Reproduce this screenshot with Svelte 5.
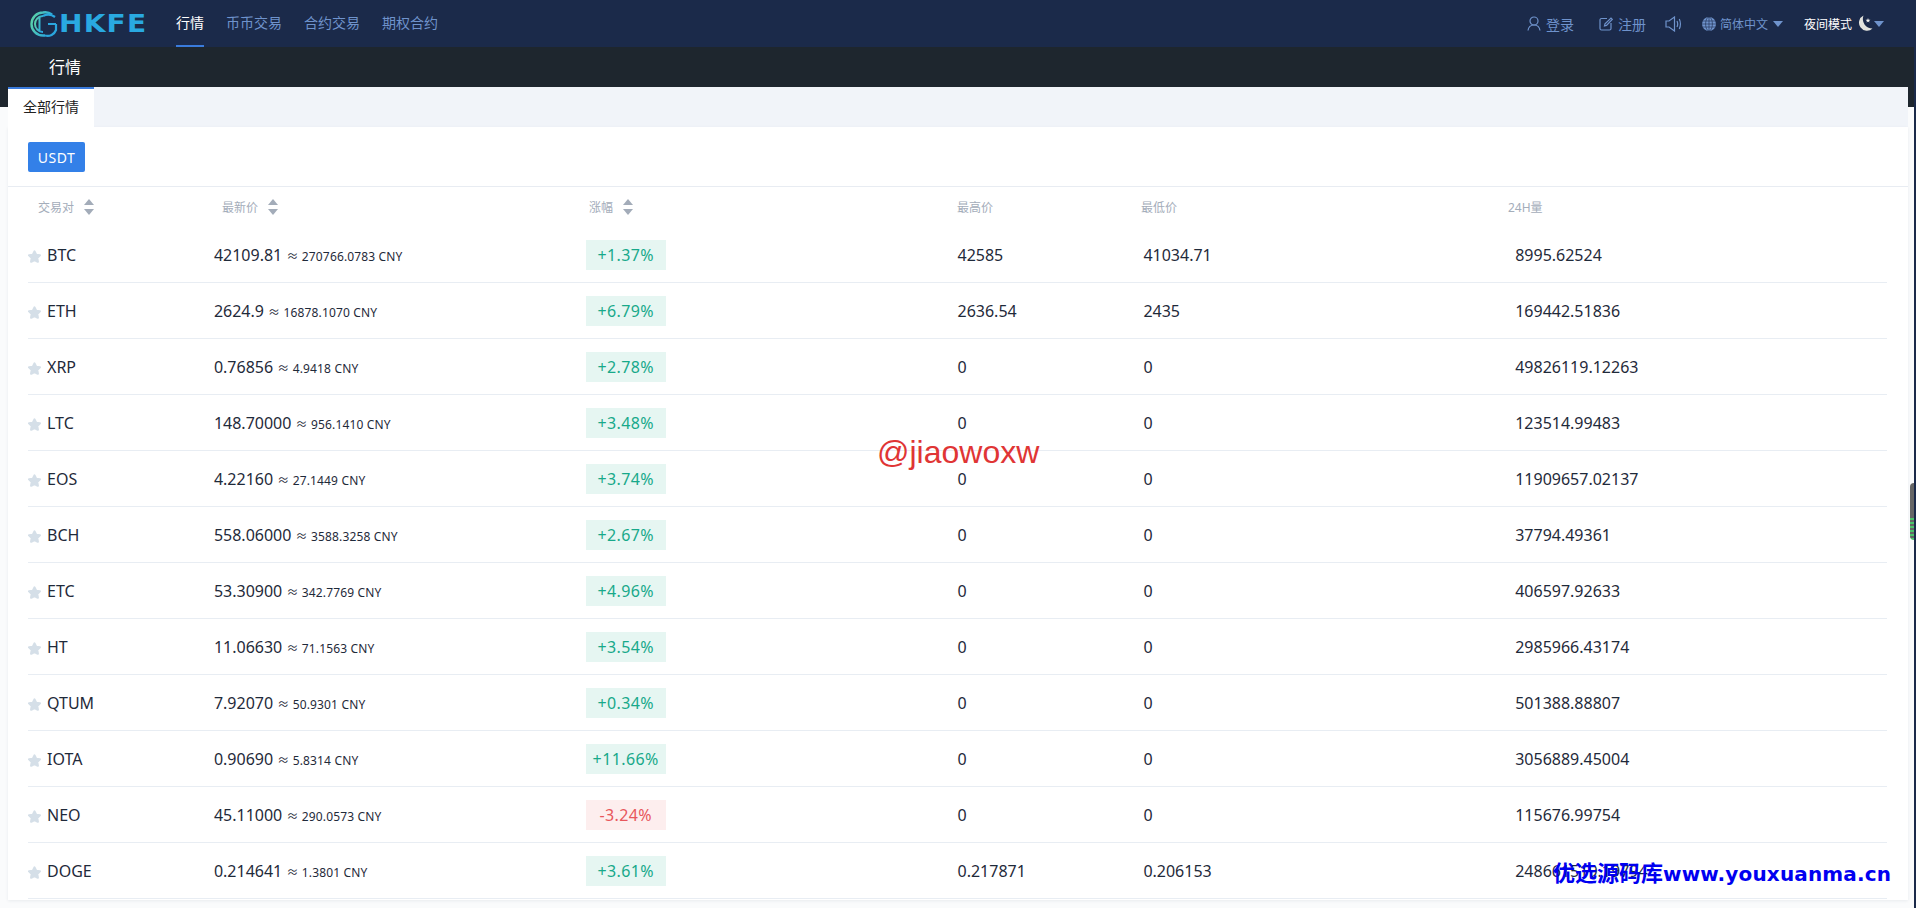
<script>
  const NAV = ['币币交易', '合约交易', '期权合约']

  const HEAD = [
    { label: '交易对', sort: true },
    { label: '最新价', sort: true },
    { label: '涨幅', sort: true },
    { label: '最高价' },
    { label: '最低价' },
    { label: '24H量' },
  ]

  const ROWS = [
    ['BTC', '42109.81', '270766.0783', '+1.37%', '42585', '41034.71', '8995.62524'],
    ['ETH', '2624.9', '16878.1070', '+6.79%', '2636.54', '2435', '169442.51836'],
    ['XRP', '0.76856', '4.9418', '+2.78%', '0', '0', '49826119.12263'],
    ['LTC', '148.70000', '956.1410', '+3.48%', '0', '0', '123514.99483'],
    ['EOS', '4.22160', '27.1449', '+3.74%', '0', '0', '11909657.02137'],
    ['BCH', '558.06000', '3588.3258', '+2.67%', '0', '0', '37794.49361'],
    ['ETC', '53.30900', '342.7769', '+4.96%', '0', '0', '406597.92633'],
    ['HT', '11.06630', '71.1563', '+3.54%', '0', '0', '2985966.43174'],
    ['QTUM', '7.92070', '50.9301', '+0.34%', '0', '0', '501388.88807'],
    ['IOTA', '0.90690', '5.8314', '+11.66%', '0', '0', '3056889.45004'],
    ['NEO', '45.11000', '290.0573', '-3.24%', '0', '0', '115676.99754'],
    ['DOGE', '0.214641', '1.3801', '+3.61%', '0.217871', '0.206153', '248661519.19794'],
  ]
</script>

<div class="page">
  <header class="top">
    <div class="logo">
      <svg width="28" height="26" viewBox="0 0 28 26" fill="none">
        <defs>
          <linearGradient id="lg" x1="0" y1="0" x2="1" y2="0.4">
            <stop offset="0" stop-color="#5fd6a4" />
            <stop offset="1" stop-color="#2aa6de" />
          </linearGradient>
        </defs>
        <path d="M22 3.5 A11 11 0 0 0 13 1.5 A11.5 11.5 0 0 0 13 24.5 L15 24.5" stroke="url(#lg)" stroke-width="2.4" />
        <path d="M13 5 A8 8 0 0 0 13 21 M9.5 5 V21" stroke="url(#lg)" stroke-width="2" />
        <path d="M25 6 A10 8 0 0 0 13 5 M26 13 H18 M26 13 V19 A9 9 0 0 1 15 24.5" stroke="#2aa6de" stroke-width="2.2" />
      </svg>
      <span class="word">HKFE</span>
    </div>
    <nav class="nav">
      <a class="on" href="#top">行情</a>
      {#each NAV as n}
        <a href="#top">{n}</a>
      {/each}
    </nav>
    <div class="tools">
      <span class="tool t-login">
        <svg width="14" height="15" viewBox="0 0 14 15" fill="none" stroke="currentColor" stroke-width="1.2">
          <circle cx="7" cy="5" r="4" />
          <path d="M1 14.5 C1.5 11 4 9 7 9 C10 9 12.5 11 13 14.5" />
        </svg>
        登录
      </span>
      <span class="tool t-reg">
        <svg width="14" height="14" viewBox="0 0 14 14" fill="none" stroke="currentColor" stroke-width="1.2">
          <path d="M8 1.5 H2.5 A1.5 1.5 0 0 0 1 3 V11.5 A1.5 1.5 0 0 0 2.5 13 H10.5 A1.5 1.5 0 0 0 12 11.5 V6" />
          <path d="M5.5 9 L6 6.8 L12 1 L13.3 2.3 L7.5 8.4 Z" />
        </svg>
        注册
      </span>
      <svg class="t-sound" width="17" height="16" viewBox="0 0 17 16" fill="none" stroke="currentColor" stroke-width="1.2">
        <path d="M1 5 H4 L9.5 1 V15 L4 11 H1 Z" />
        <path d="M12 5 Q13.4 8 12 11 M14.3 3 Q16.6 8 14.3 13" />
      </svg>
      <span class="tool t-lang">
        <svg width="14" height="14" viewBox="0 0 14 14" fill="#6f93cc" stroke="#1b2a4a" stroke-width="0.6">
          <circle cx="7" cy="7" r="7" stroke="none" />
          <path d="M0 4 H14 M0 7 H14 M0 10 H14" fill="none" />
          <ellipse cx="7" cy="7" rx="3.4" ry="7" fill="none" />
          <path d="M7 0 V14" fill="none" />
        </svg>
        <span class="small">简体中文</span>
        <i class="caret"></i>
      </span>
      <span class="tool t-night">
        <span class="small">夜间模式</span>
        <svg width="17" height="17" viewBox="0 0 17 17">
          <path d="M6.5 0.5 A8 8 0 1 0 15.5 13.5 A9.5 9.5 0 0 1 6.5 0.5 Z" fill="#e4e4de" />
          <path d="M11 3 L11.6 4.7 L13.4 4.8 L12 5.9 L12.5 7.6 L11 6.6 L9.5 7.6 L10 5.9 L8.6 4.8 L10.4 4.7 Z" fill="#f4f4f0" />
        </svg>
        <i class="caret"></i>
      </span>
    </div>
  </header>

  <div class="banner"><span>行情</span></div>

  <main class="main">
    <div class="tabs"><span class="tab">全部行情</span></div>
    <div class="panel">
      <div class="filter"><button class="btn">USDT</button></div>

      <div class="thead">
        {#each HEAD as h}
          <span class="th">
            {h.label}
            {#if h.sort}
              <span class="sort"><i class="up"></i><i class="down"></i></span>
            {/if}
          </span>
        {/each}
      </div>

      <div class="tbody">
        {#each ROWS as r}
          <div class="row">
            <span class="pair">
              <svg class="star" width="13" height="13" viewBox="0 0 24 24">
                <path d="M12 2.5 L15 8.8 L22 9.8 L17 14.8 L18.2 21.6 L12 18.4 L5.8 21.6 L7 14.8 L2 9.8 L9 8.8 Z" fill="#d5dfe8" stroke="#d5dfe8" stroke-width="4" stroke-linejoin="round" />
              </svg>
              {r[0]}
            </span>
            <span>{r[1]} <small>≈ {r[2]} CNY</small></span>
            <span><b class="rate" class:down={r[3][0] === '-'}>{r[3]}</b></span>
            <span>{r[4]}</span>
            <span>{r[5]}</span>
            <span>{r[6]}</span>
          </div>
        {/each}
      </div>
    </div>
  </main>

  <div class="mark-red">@jiaowoxw</div>
  <div class="mark-blue"><span>优选源码库</span>www.youxuanma.cn</div>
  <div class="handle"></div>
</div>

<style>
  :global(body) {
    margin: 0;
    background: #fafbfc;
  }

  .page {
    position: relative;
    height: 908px;
    overflow: hidden;
    box-sizing: border-box;
    border-right: 2px solid #1b2a4a;
    font-family: "Noto Sans", "Noto Sans CJK SC", sans-serif;
    color: #1f2a3a;
  }

  .top {
    height: 47px;
    background: #1b2a4a;
    display: flex;
    align-items: center;
    padding-left: 30px;
    color: #6f93cc;
    font-size: 14px;
  }

  .logo {
    display: flex;
    align-items: center;
    width: 146px;
    height: 47px;
  }
  .word {
    font-family: "DejaVu Sans", sans-serif;
    font-weight: 700;
    font-size: 24px;
    letter-spacing: 1px;
    margin-left: 1px;
    color: #29a9e1;
    line-height: 1;
    transform: scaleX(1.17);
    transform-origin: left center;
  }

  .nav {
    display: flex;
    gap: 22px;
    height: 47px;
  }
  .nav a {
    color: #6f93cc;
    text-decoration: none;
    line-height: 45px;
    height: 45px;
    border-bottom: 2px solid transparent;
  }
  .nav a.on {
    color: #fff;
    border-bottom-color: #3a7bdc;
  }

  .tools {
    margin-left: auto;
    display: flex;
    align-items: center;
    margin-right: 30px;
  }
  .tool {
    display: inline-flex;
    align-items: center;
  }
  .t-login svg, .t-reg svg { margin-right: 5px; }
  .t-reg { margin-left: 25px; }
  .t-sound { margin-left: 19px; }
  .t-lang { margin-left: 20px; }
  .t-lang svg { margin-right: 4px; }
  .t-night { margin-left: 21px; color: #fff; }
  .t-night svg { margin-left: 5px; }
  .small { font-size: 12px; }

  .caret {
    display: inline-block;
    width: 0;
    height: 0;
    margin-left: 5px;
    border-left: 5px solid transparent;
    border-right: 5px solid transparent;
    border-top: 6px solid #6f93cc;
  }
  .t-night .caret { margin-left: 0; }

  .banner {
    height: 60px;
    background: #1e262e;
    color: #fff;
    font-size: 16px;
    padding-left: 49px;
    line-height: 40px;
  }

  .main {
    margin-top: -20px;
    padding: 0 6px 0 8px;
  }

  .tabs {
    height: 40px;
    background: #f1f4f9;
    display: flex;
  }
  .tab {
    width: 86px;
    box-sizing: border-box;
    background: #fff;
    border-top: 2px solid #3a7bdc;
    font-size: 14px;
    color: #222;
    text-align: center;
    line-height: 35px;
  }

  .panel {
    background: #fff;
    box-shadow: 0 1px 3px rgba(30, 50, 80, .08);
    height: 773px;
  }

  .filter {
    padding: 15px 20px 14px;
    height: 30px;
    border-bottom: 1px solid #e8ecf2;
  }
  .btn {
    display: block;
    width: 57px;
    height: 30px;
    padding: 0;
    border: none;
    border-radius: 2px;
    background: #3380e8;
    color: #fff;
    font-family: inherit;
    font-size: 14px;
    letter-spacing: .5px;
  }

  .thead {
    display: grid;
    grid-template-columns: 184px 367px 368px 184px 367px 1fr;
    height: 40px;
    padding-left: 30px;
    align-items: center;
    margin-right: 20px;
    font-size: 12px;
    color: #a4adba;
  }
  .th {
    display: inline-flex;
    align-items: center;
  }
  .sort {
    display: inline-flex;
    flex-direction: column;
    gap: 4px;
    margin-left: 10px;
  }
  .sort i {
    display: block;
    width: 0;
    height: 0;
    border-left: 5px solid transparent;
    border-right: 5px solid transparent;
  }
  .sort .up { border-bottom: 6px solid #a3acb9; }
  .sort .down { border-top: 6px solid #a3acb9; }

  .tbody {
    margin: 0 21px 0 20px;
  }
  .row {
    display: grid;
    grid-template-columns: 10% 20% 20% 10% 20% 20%;
    height: 55px;
    align-items: center;
    border-bottom: 1px solid #e8edf3;
    font-size: 16px;
  }
  .pair {
    display: flex;
    align-items: center;
    gap: 6px;
  }
  .star {
    margin-top: 3px;
  }
  small {
    font-size: 12px;
    letter-spacing: .15px;
  }

  .rate {
    display: block;
    width: 80px;
    height: 30px;
    line-height: 30px;
    text-align: center;
    font-weight: 400;
    letter-spacing: .4px;
    color: #18a98a;
    background: #e6f6f2;
  }
  .rate.down {
    color: #e8575c;
    background: #fdeeee;
  }

  .mark-red {
    position: absolute;
    left: 877px;
    top: 432px;
    font-family: "Liberation Sans", sans-serif;
    font-size: 32px;
    line-height: 40px;
    color: #e03535;
  }
  .mark-blue {
    position: absolute;
    left: 1553px;
    top: 856px;
    font-family: "DejaVu Sans", sans-serif;
    font-weight: 700;
    font-size: 20px;
    line-height: 30px;
    letter-spacing: .15px;
    color: #0000f0;
    white-space: nowrap;
  }
  .mark-blue span {
    font-family: "Noto Sans CJK SC", sans-serif;
    font-size: 22px;
    letter-spacing: 0;
  }

  .handle {
    position: absolute;
    right: 0;
    top: 483px;
    width: 4px;
    height: 57px;
    border-radius: 4px 0 0 4px;
    background:
      repeating-linear-gradient(#4cc46a 0 2px, #666 2px 4px) bottom / 100% 22px no-repeat,
      #666;
  }
</style>
